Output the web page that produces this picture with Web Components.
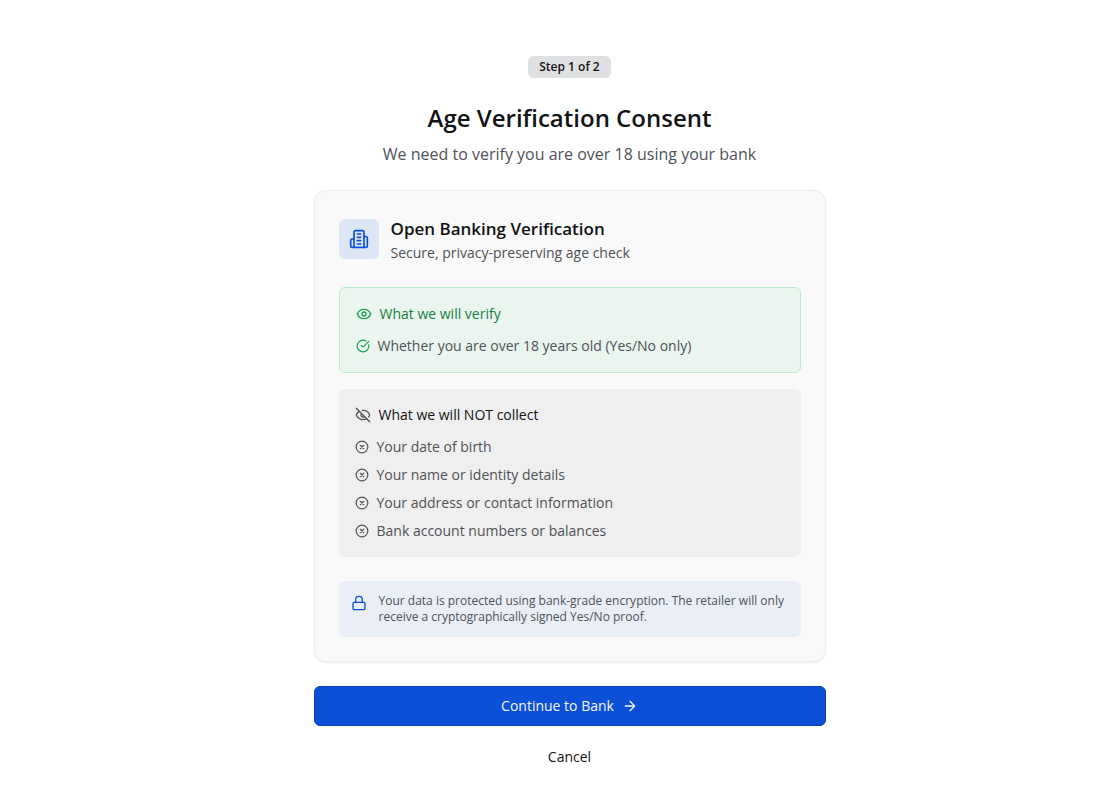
<!DOCTYPE html>
<html lang="en">
<head>
<meta charset="UTF-8">
<meta name="viewport" content="width=device-width, initial-scale=1.0">
<title>Age Verification Consent</title>
<style>
    :root {
        --text: #121315;
        --muted: #4f5257;
        --primary: #0b50d7;
        --green: #16a34a;
    }
    body {
        margin: 0;
        background: #fff;
        color: var(--text);
        font-family: "Open Sans", "Noto Sans", sans-serif;
        font-size: 14px;
        line-height: 20px;
    }
</style>
</head>
<body>
<consent-page>
    <step-badge slot="badge">Step 1 of 2</step-badge>
    <span slot="title">Age Verification Consent</span>
    <span slot="subtitle">We need to verify you are over 18 using your bank</span>

    <consent-card>
        <span slot="title">Open Banking Verification</span>
        <span slot="subtitle">Secure, privacy-preserving age check</span>

        <check-panel variant="verify" icon="eye">
            <span slot="heading">What we will verify</span>
            <check-item icon="check">Whether you are over 18 years old (Yes/No only)</check-item>
        </check-panel>

        <check-panel icon="eye-off">
            <span slot="heading">What we will NOT collect</span>
            <check-item icon="cross">Your date of birth</check-item>
            <check-item icon="cross">Your name or identity details</check-item>
            <check-item icon="cross">Your address or contact information</check-item>
            <check-item icon="cross">Bank account numbers or balances</check-item>
        </check-panel>

        <security-note slot="note">Your data is protected using bank-grade encryption. The retailer will only receive a cryptographically signed Yes/No proof.</security-note>
    </consent-card>

    <action-button slot="actions" variant="primary" icon="arrow">Continue to Bank</action-button>
    <action-button slot="actions">Cancel</action-button>
</consent-page>

<script>
const ICONS = {
    building: `<path d="M6 22V4a2 2 0 0 1 2-2h8a2 2 0 0 1 2 2v18Z"/><path d="M6 12H4a2 2 0 0 0-2 2v6a2 2 0 0 0 2 2h2"/><path d="M18 9h2a2 2 0 0 1 2 2v9a2 2 0 0 1-2 2h-2"/><path d="M10 6h4M10 10h4M10 14h4M10 18h4"/>`,
    eye: `<path d="M2.062 12.348a1 1 0 0 1 0-.696 10.75 10.75 0 0 1 19.876 0 1 1 0 0 1 0 .696 10.75 10.75 0 0 1-19.876 0"/><circle cx="12" cy="12" r="3"/>`,
    'eye-off': `<path d="M10.733 5.076a10.744 10.744 0 0 1 11.205 6.575 1 1 0 0 1 0 .696 10.747 10.747 0 0 1-1.444 2.49"/><path d="M14.084 14.158a3 3 0 0 1-4.242-4.242"/><path d="M17.479 17.499a10.75 10.75 0 0 1-15.417-5.151 1 1 0 0 1 0-.696 10.75 10.75 0 0 1 4.446-5.143"/><path d="m2 2 20 20"/>`,
    check: `<path d="M21.801 10A10 10 0 1 1 17 3.335"/><path d="m9 11 3 3L22 4"/>`,
    cross: `<circle cx="12" cy="12" r="10"/><path d="m15 9-6 6M9 9l6 6"/>`,
    lock: `<rect x="3" y="11" width="18" height="11" rx="2"/><path d="M7 11V7a5 5 0 0 1 10 0v4"/>`,
    arrow: `<path d="M5 12h14M12 5l7 7-7 7"/>`
};

class UiIcon extends HTMLElement {
    connectedCallback() {
        this.attachShadow({ mode: 'open' });
        this.shadowRoot.innerHTML = `
            <style>
                :host {
                    display: block;
                    flex: none;
                    width: var(--icon-size, 16px);
                    height: var(--icon-size, 16px);
                }
                svg {
                    display: block;
                    width: 100%;
                    height: 100%;
                }
            </style>
            <svg viewBox="0 0 24 24" fill="none" stroke="currentColor" stroke-width="2" stroke-linecap="round" stroke-linejoin="round" aria-hidden="true">${ICONS[this.getAttribute('name')]}</svg>
        `;
    }
}

class StepBadge extends HTMLElement {
    connectedCallback() {
        this.attachShadow({ mode: 'open' });
        this.shadowRoot.innerHTML = `
            <style>
                :host {
                    display: inline-block;
                    padding: 3px 11px;
                    border-radius: 6px;
                    background: #dfe0e2;
                    font-size: 12px;
                    line-height: 16px;
                    font-weight: 600;
                }
            </style>
            <slot></slot>
        `;
    }
}

class ConsentPage extends HTMLElement {
    connectedCallback() {
        this.attachShadow({ mode: 'open' });
        this.shadowRoot.innerHTML = `
            <style>
                :host {
                    display: block;
                    padding: 56px 0 8px 21px;
                }
                main {
                    display: flex;
                    flex-direction: column;
                    gap: 24px;
                    max-width: 512px;
                    margin: 0 auto;
                }
                header {
                    text-align: center;
                }
                .badge {
                    display: flex;
                    justify-content: center;
                    margin-bottom: 24px;
                }
                h1 {
                    margin: 0 0 8px;
                    font-size: 24px;
                    line-height: 32px;
                    font-weight: 600;
                }
                p {
                    margin: 0;
                    font-size: 16px;
                    line-height: 24px;
                    color: var(--muted);
                }
                .actions {
                    display: flex;
                    flex-direction: column;
                    gap: 12px;
                }
            </style>
            <main>
                <header>
                    <div class="badge"><slot name="badge"></slot></div>
                    <h1><slot name="title"></slot></h1>
                    <p><slot name="subtitle"></slot></p>
                </header>
                <slot></slot>
                <div class="actions"><slot name="actions"></slot></div>
            </main>
        `;
    }
}

class ConsentCard extends HTMLElement {
    connectedCallback() {
        this.attachShadow({ mode: 'open' });
        this.shadowRoot.innerHTML = `
            <style>
                :host {
                    display: block;
                    padding: 24px;
                    border: 1px solid #ededed;
                    border-radius: 12px;
                    background: #f9f9f9;
                    box-shadow: 0 1px 2px rgba(0, 0, 0, 0.07);
                }
                .head {
                    display: flex;
                    align-items: center;
                    gap: 12px;
                }
                .tile {
                    display: grid;
                    place-items: center;
                    width: 40px;
                    height: 40px;
                    border-radius: 6px;
                    background: #dde6f5;
                    color: var(--primary);
                    --icon-size: 20px;
                }
                h2 {
                    margin: 0;
                    font-size: 17px;
                    line-height: 28px;
                    font-weight: 600;
                }
                p {
                    margin: 0;
                    color: var(--muted);
                }
                .panels {
                    display: flex;
                    flex-direction: column;
                    gap: 16px;
                    margin: 24px 0;
                }
            </style>
            <div class="head">
                <div class="tile"><ui-icon name="building"></ui-icon></div>
                <div>
                    <h2><slot name="title"></slot></h2>
                    <p><slot name="subtitle"></slot></p>
                </div>
            </div>
            <div class="panels"><slot></slot></div>
            <slot name="note"></slot>
        `;
    }
}

class CheckPanel extends HTMLElement {
    connectedCallback() {
        this.attachShadow({ mode: 'open' });
        this.shadowRoot.innerHTML = `
            <style>
                :host {
                    display: block;
                    padding: 16px;
                    border-radius: 6px;
                    background: #efefef;
                }
                :host([variant="verify"]) {
                    border: 1px solid #b9e9ca;
                    background: #ebf5f0;
                    --item-icon: var(--green);
                }
                h3 {
                    display: flex;
                    align-items: center;
                    gap: 8px;
                    margin: 0 0 12px;
                    font-size: 14px;
                    line-height: 20px;
                    font-weight: 500;
                }
                ui-icon {
                    color: var(--item-icon, var(--muted));
                }
                :host([variant="verify"]) h3 {
                    color: #15803d;
                }
                .list {
                    display: flex;
                    flex-direction: column;
                    gap: 8px;
                }
            </style>
            <h3><ui-icon name="${this.getAttribute('icon')}"></ui-icon><slot name="heading"></slot></h3>
            <div class="list" role="list"><slot></slot></div>
        `;
    }
}

class CheckItem extends HTMLElement {
    connectedCallback() {
        this.setAttribute('role', 'listitem');
        this.attachShadow({ mode: 'open' });
        this.shadowRoot.innerHTML = `
            <style>
                :host {
                    display: flex;
                    align-items: center;
                    gap: 8px;
                    color: var(--muted);
                    --icon-size: 14px;
                }
                ui-icon {
                    color: var(--item-icon, var(--muted));
                }
            </style>
            <ui-icon name="${this.getAttribute('icon')}"></ui-icon>
            <span><slot></slot></span>
        `;
    }
}

class SecurityNote extends HTMLElement {
    connectedCallback() {
        this.attachShadow({ mode: 'open' });
        this.shadowRoot.innerHTML = `
            <style>
                :host {
                    display: flex;
                    align-items: flex-start;
                    gap: 12px;
                    padding: 12px;
                    border-radius: 6px;
                    background: #eaeef6;
                    color: var(--muted);
                    font-size: 12px;
                    line-height: 16px;
                }
                ui-icon {
                    margin-top: 2px;
                    color: var(--primary);
                }
            </style>
            <ui-icon name="lock"></ui-icon>
            <span><slot></slot></span>
        `;
    }
}

class ActionButton extends HTMLElement {
    connectedCallback() {
        const icon = this.getAttribute('icon');
        this.attachShadow({ mode: 'open' });
        this.shadowRoot.innerHTML = `
            <style>
                :host {
                    display: block;
                }
                button {
                    display: flex;
                    align-items: center;
                    justify-content: center;
                    gap: 8px;
                    width: 100%;
                    min-height: 38px;
                    padding: 8px 16px;
                    border: 1px solid transparent;
                    border-radius: 6px;
                    background: none;
                    color: inherit;
                    font: inherit;
                    font-weight: 500;
                    cursor: pointer;
                }
                :host([variant="primary"]) button {
                    min-height: 40px;
                    border-color: #0a43b4;
                    background: var(--primary);
                    color: #f5f8fe;
                }
            </style>
            <button type="button"><slot></slot>${icon ? `<ui-icon name="${icon}"></ui-icon>` : ''}</button>
        `;
    }
}

customElements.define('ui-icon', UiIcon);
customElements.define('step-badge', StepBadge);
customElements.define('consent-page', ConsentPage);
customElements.define('consent-card', ConsentCard);
customElements.define('check-panel', CheckPanel);
customElements.define('check-item', CheckItem);
customElements.define('security-note', SecurityNote);
customElements.define('action-button', ActionButton);
</script>
</body>
</html>
